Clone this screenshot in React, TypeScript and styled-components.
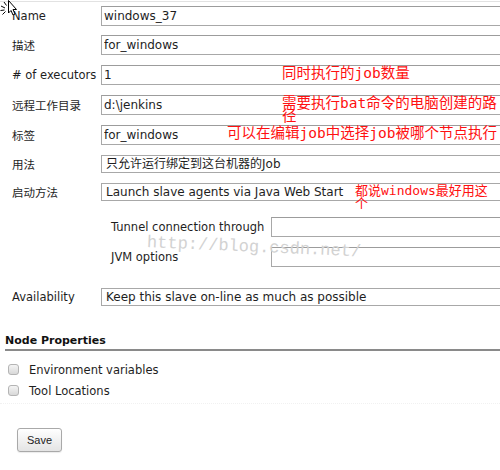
import React from "react";
import styled, { createGlobalStyle } from "styled-components";

const Global = createGlobalStyle`
  html, body { margin: 0; padding: 0; background: #fff; overflow: hidden; }
  body { font-family: "DejaVu Sans", "Noto Sans CJK SC", sans-serif; color: #222; }
`;

const Page = styled.div`
  position: relative;
  width: 500px;
  height: 470px;
  overflow: hidden;
  padding-top: 1px;
  box-sizing: border-box;
`;

const Form = styled.div`
  border-top: 1px solid #e2e2e2;
  display: flex;
  flex-direction: column;
`;

const FieldRow = styled.div<{ $h?: number; $mt?: number }>`
  display: flex;
  align-items: center;
  height: ${(p) => p.$h ?? 30}px;
  margin-top: ${(p) => p.$mt ?? 0}px;
  flex-shrink: 0;
`;

const Label = styled.div<{ $left?: number; $w?: number }>`
  box-sizing: border-box;
  padding-left: ${(p) => p.$left ?? 12}px;
  width: ${(p) => p.$w ?? 101}px;
  flex-shrink: 0;
  font-size: 11.5px;
  white-space: nowrap;
  color: #1e1e1e;
`;

const TextBox = styled.input`
  box-sizing: border-box;
  flex-shrink: 0;
  height: 20px;
  width: 440px;
  margin: 0;
  padding: 0 2px;
  border: 1px solid #a8a8a8;
  border-top-color: #9c9c9c;
  border-radius: 0;
  font-family: "DejaVu Sans", "Noto Sans CJK SC", sans-serif;
  font-size: 12px;
  color: #1e1e1e;
  background: #fff;
  outline: none;
`;

const SelectBox = styled.div`
  box-sizing: border-box;
  flex-shrink: 0;
  height: 18px;
  width: 440px;
  padding: 0 4px;
  border: 1px solid #a8a8a8;
  font-size: 12px;
  line-height: 16px;
  white-space: nowrap;
  color: #1e1e1e;
  background: #fff;
`;

const Heading = styled.div`
  margin: 22px 0 0 5px;
  padding-bottom: 1px;
  font-size: 11px;
  font-weight: bold;
  line-height: 14px;
  color: #111;
  border-bottom: 2px solid #8a8a8a;
`;

const Spacer = styled.div`
  height: 8px;
`;

const CheckRow = styled.label`
  display: flex;
  align-items: center;
  height: 21px;
  padding-left: 8px;
  gap: 10px;
  font-size: 11.5px;
  color: #1e1e1e;
`;

const CheckBox = styled.span`
  box-sizing: border-box;
  width: 11px;
  height: 11px;
  border: 1px solid #b4b4b4;
  border-radius: 3px;
  background: linear-gradient(#f4f4f4, #d8d8d8);
  flex-shrink: 0;
`;

const Rule = styled.div`
  margin-top: 2px;
  border-top: 1px dotted #f1f1f1;
`;

const ButtonBar = styled.div`
  padding: 24px 0 0 17px;
`;

const SaveButton = styled.button`
  box-sizing: border-box;
  width: 45px;
  height: 24px;
  border: 1px solid #a9a9a9;
  border-radius: 3px;
  background: linear-gradient(#ffffff, #e4e4e4);
  font-family: "Liberation Sans", Arial, sans-serif;
  font-size: 11px;
  color: #222;
  padding: 0;
  box-shadow: 0 1px 1px rgba(0, 0, 0, 0.08);
`;

const Note = styled.div<{ $x: number; $y: number; $size?: number }>`
  position: absolute;
  left: ${(p) => p.$x}px;
  top: ${(p) => p.$y}px;
  font-family: "DejaVu Sans Mono", "Noto Sans CJK SC", monospace;
  font-size: ${(p) => p.$size ?? 14.5}px;
  line-height: 13px;
  color: #ff1010;
  white-space: nowrap;
  pointer-events: none;
`;

const NoteLine = styled.span`
  display: block;
`;

const Watermark = styled.div`
  position: absolute;
  left: 147px;
  top: 233px;
  font-family: "Liberation Mono", monospace;
  font-size: 17px;
  color: #d2d2d2;
  white-space: nowrap;
  transform: rotate(2.5deg);
  transform-origin: left center;
  pointer-events: none;
`;

const Cursor = styled.svg`
  position: absolute;
  left: 0;
  top: 0;
`;

const rows: { label: string; value: string }[] = [
  { label: "Name", value: "windows_37" },
  { label: "描述", value: "for_windows" },
  { label: "# of executors", value: "1" },
  { label: "远程工作目录", value: "d:\\jenkins" },
  { label: "标签", value: "for_windows" },
];

export default function App() {
  return (
    <Page>
      <Global />
      <Form>
        {rows.map((r, i) => (
          <FieldRow key={r.label} $h={i === 0 ? 28 : 30}>
            <Label>{r.label}</Label>
            <TextBox defaultValue={r.value} readOnly />
          </FieldRow>
        ))}
        <FieldRow $h={28}>
          <Label>用法</Label>
          <SelectBox>只允许运行绑定到这台机器的Job</SelectBox>
        </FieldRow>
        <FieldRow $h={28}>
          <Label>启动方法</Label>
          <SelectBox>Launch slave agents via Java Web Start</SelectBox>
        </FieldRow>
        <FieldRow $mt={6}>
          <Label $left={111} $w={271}>Tunnel connection through</Label>
          <TextBox readOnly />
        </FieldRow>
        <FieldRow>
          <Label $left={111} $w={271}>JVM options</Label>
          <TextBox readOnly />
        </FieldRow>
        <FieldRow $mt={10}>
          <Label>Availability</Label>
          <SelectBox>Keep this slave on-line as much as possible</SelectBox>
        </FieldRow>
        <Heading>Node Properties</Heading>
        <Spacer />
        <CheckRow>
          <CheckBox />
          Environment variables
        </CheckRow>
        <CheckRow>
          <CheckBox />
          Tool Locations
        </CheckRow>
        <Rule />
        <ButtonBar>
          <SaveButton>Save</SaveButton>
        </ButtonBar>
      </Form>

      <Watermark>http://blog.csdn.net/</Watermark>

      <Note $x={282} $y={67}>同时执行的job数量</Note>
      <Note $x={282} $y={97}>
        <NoteLine>需要执行bat命令的电脑创建的路</NoteLine>
        <NoteLine>径</NoteLine>
      </Note>
      <Note $x={227} $y={127}>可以在编辑job中选择job被哪个节点执行</Note>
      <Note $x={355} $y={184} $size={13}>
        <NoteLine>都说windows最好用这</NoteLine>
        <NoteLine>个</NoteLine>
      </Note>

      <Cursor width="20" height="18" viewBox="0 0 20 18">
        <path
          d="M8.5 0.5 L8.5 13 L11 10.5 L13 15 L15 14 L13 9.5 L16.5 9.5 Z"
          fill="#fff"
          stroke="#000"
          strokeWidth="1"
          strokeLinejoin="miter"
        />
        <path d="M1 6 L5 8 M0.5 10.5 L4.5 10 M2.5 14.5 L5.5 11.5 M4 2 L6.5 5.5" stroke="#000" strokeWidth="1" />
      </Cursor>
    </Page>
  );
}
